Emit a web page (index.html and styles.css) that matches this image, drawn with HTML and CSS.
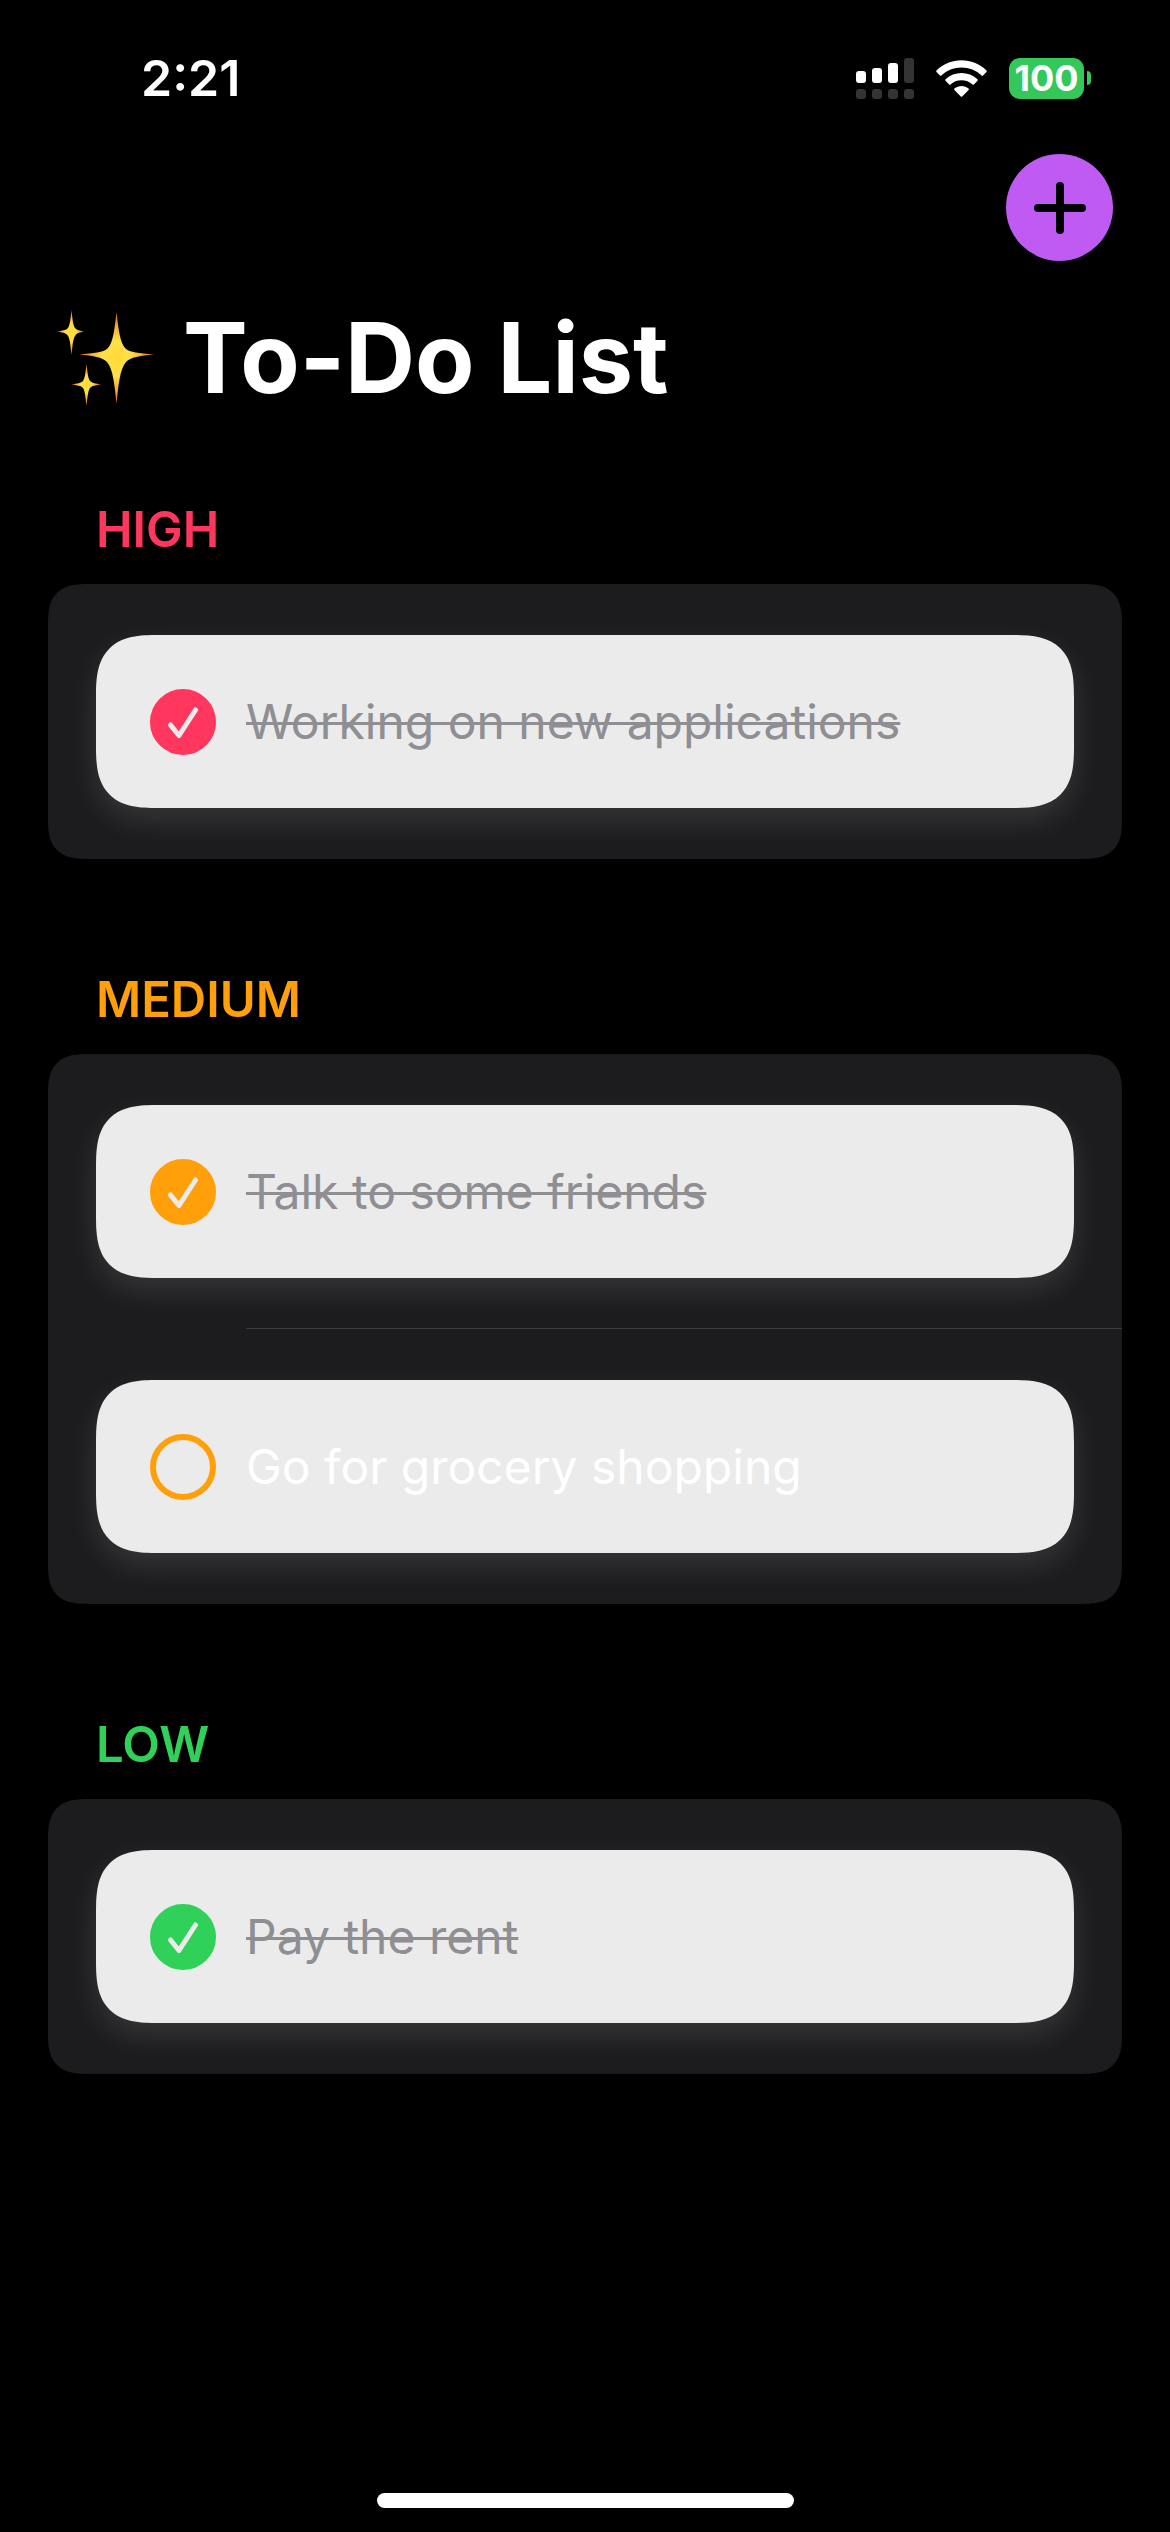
FILE: index.html
```html
<!DOCTYPE html>
<html lang="en">
<head>
  <meta charset="utf-8">
  <meta name="viewport" content="width=device-width, initial-scale=1">
  <title>To-Do List</title>
  <link rel="stylesheet" href="styles.css">
</head>
<body>
  <div class="app">
    <header class="status-bar">
      <time class="clock">2:21</time>
      <div class="indicators">
        <svg class="signal" viewBox="0 0 58 41" role="img" aria-label="Signal strength">
          <g fill="#fff">
            <rect x="0" y="13" width="10" height="12" rx="3"/>
            <rect x="16" y="10" width="10" height="15" rx="3"/>
            <rect x="32" y="5" width="10" height="20" rx="3"/>
          </g>
          <g fill="#333">
            <rect x="48" y="0" width="10" height="25" rx="3"/>
            <rect x="0" y="31" width="10" height="10" rx="3"/>
            <rect x="16" y="31" width="10" height="10" rx="3"/>
            <rect x="32" y="31" width="10" height="10" rx="3"/>
            <rect x="48" y="31" width="10" height="10" rx="3"/>
          </g>
        </svg>
        <svg class="wifi" viewBox="0 0 51 37" role="img" aria-label="Wi-Fi">
          <g fill="#fff">
            <path d="M25.500 7.600C33.200 7.600 40.300 10.500 45.600 15.500C46 15.900 46.600 15.900 47 15.500L50.500 11.900C50.900 11.500 50.900 10.900 50.500 10.500C36.500-3.100 14.500-3.100.5 10.500C.1 10.900.1 11.500.5 11.900L4 15.500C4.400 15.900 5 15.900 5.400 15.500C10.700 10.500 17.800 7.600 25.500 7.600Z"/>
            <path d="M25.500 20.200C29.700 20.200 33.600 21.700 36.500 24.400C36.900 24.800 37.500 24.800 37.900 24.400L41.500 20.800C41.900 20.400 41.900 19.700 41.500 19.300C32.500 10.900 18.500 10.900 9.500 19.300C9.100 19.700 9.100 20.400 9.500 20.800L13.100 24.400C13.500 24.800 14.100 24.800 14.500 24.400C17.400 21.700 21.300 20.200 25.500 20.200Z"/>
            <path d="M32.600 28.600C33 29 33 29.600 32.600 30L26.200 36.500C25.800 36.900 25.200 36.900 24.800 36.500L18.400 30C18 29.600 18 29 18.400 28.600C22.500 25.200 28.500 25.200 32.600 28.600Z"/>
          </g>
        </svg>
        <div class="battery">
          <span class="battery-level">100</span>
          <span class="battery-tip"></span>
        </div>
      </div>
    </header>

    <nav class="toolbar">
      <button class="add-button" type="button" aria-label="Add task">
        <svg class="plus" viewBox="0 0 52 52" aria-hidden="true">
          <path d="M26 4V48M4 26H48" stroke="#000" stroke-width="8" stroke-linecap="round"/>
        </svg>
      </button>
    </nav>

    <main>
      <h1 class="title">
        <svg class="sparkles" viewBox="0 0 98 96" aria-hidden="true">
          <defs>
            <radialGradient id="gold">
              <stop offset="0" stop-color="#ffdc35"/>
              <stop offset=".38" stop-color="#ffdf4a"/>
              <stop offset=".6" stop-color="#fdb93a"/>
              <stop offset="1" stop-color="#d9702a"/>
            </radialGradient>
          </defs>
          <g fill="url(#gold)">
            <path d="M59.500 2C61.500 20 63 32 68 38C73 43 82 43 97 44.500C82 46 74 47 69 52C63 59 61.500 74 59.500 94C57.500 74 56 59 50 52C45 47 37 46 22 44.500C37 43 46 43 51 38C56 32 57.500 20 59.500 2Z"/>
            <path d="M14.500 0C15.500 9 16 15 18 18C20 20.500 23 20.500 27 21.500C23 22.500 20 22.500 18 26C16 29 15.500 36 14.500 45C13.500 36 13 29 11 26C9 22.500 5 22.500 0 21.500C5 20.500 9 20.500 11 18C13 15 13.500 9 14.500 0Z"/>
            <path d="M29.500 54C30.500 63 31 68 33 71C35 73 38.500 73.500 44 74.500C38.500 75.500 35 75.500 33 78C31 81 30.500 87 29.500 96C28.500 87 28 81 26 78C24 75.500 20.500 75.500 14 74.500C20.500 73.500 24 73 26 71C28 68 28.500 63 29.500 54Z"/>
          </g>
        </svg>
        <span>To-Do List</span>
      </h1>

      <section class="group high">
        <h2 class="group-name">HIGH</h2>
        <ul class="list">
          <li>
            <label class="task">
              <span class="check">
                <input type="checkbox" checked>
                <svg class="tick" viewBox="0 0 66 66" aria-hidden="true"><path d="M20.500 36L29 46.500L45.500 21"/></svg>
              </span>
              <span class="task-name">Working on new applications</span>
            </label>
          </li>
        </ul>
      </section>

      <section class="group medium">
        <h2 class="group-name">MEDIUM</h2>
        <ul class="list">
          <li>
            <label class="task">
              <span class="check">
                <input type="checkbox" checked>
                <svg class="tick" viewBox="0 0 66 66" aria-hidden="true"><path d="M20.500 36L29 46.500L45.500 21"/></svg>
              </span>
              <span class="task-name">Talk to some friends</span>
            </label>
          </li>
          <li>
            <label class="task">
              <span class="check">
                <input type="checkbox">
                <svg class="tick" viewBox="0 0 66 66" aria-hidden="true"><path d="M20.500 36L29 46.500L45.500 21"/></svg>
              </span>
              <span class="task-name">Go for grocery shopping</span>
            </label>
          </li>
        </ul>
      </section>

      <section class="group low">
        <h2 class="group-name">LOW</h2>
        <ul class="list">
          <li>
            <label class="task">
              <span class="check">
                <input type="checkbox" checked>
                <svg class="tick" viewBox="0 0 66 66" aria-hidden="true"><path d="M20.500 36L29 46.500L45.500 21"/></svg>
              </span>
              <span class="task-name">Pay the rent</span>
            </label>
          </li>
        </ul>
      </section>
    </main>

    <div class="home-indicator"></div>
  </div>
</body>
</html>
```

FILE: styles.css
```css
* {
  box-sizing: border-box;
}

body {
  margin: 0;
  background: #000;
  color: #fff;
  font-family: Inter, "Liberation Sans", sans-serif;
}

.app {
  display: flex;
  flex-direction: column;
  min-height: 100vh;
  padding: 48px 48px 24px;
}

/* Status bar */
.status-bar {
  display: flex;
  align-items: center;
  justify-content: space-between;
  height: 60px;
  padding: 0 31px 0 93px;
}

.clock {
  font-size: 50px;
  font-weight: 600;
  line-height: 60px;
}

.indicators {
  display: flex;
  align-items: center;
  gap: 22px;
}

.signal {
  width: 58px;
  height: 41px;
}

.wifi {
  width: 51px;
  height: 37px;
}

.battery {
  display: flex;
  align-items: center;
  gap: 3px;
}

.battery-level {
  width: 75px;
  border-radius: 11px;
  background: #34c759;
  font-size: 36px;
  font-weight: 700;
  line-height: 41px;
  text-align: center;
}

.battery-tip {
  width: 4px;
  height: 14px;
  border-radius: 0 4px 4px 0;
  background: #34c759;
}

/* Toolbar */
.toolbar {
  display: flex;
  justify-content: flex-end;
  padding: 46px 9px 0;
}

.add-button {
  display: grid;
  place-items: center;
  width: 107px;
  height: 107px;
  padding: 0;
  border: 0;
  border-radius: 50%;
  background: #bf5af2;
}

.plus {
  width: 52px;
  height: 52px;
}

.title {
  display: flex;
  align-items: center;
  gap: 28px;
  margin: 37px 0 82px;
  padding-left: 9px;
  font-size: 97px;
  font-weight: 700;
  line-height: 120px;
}

.sparkles {
  width: 98px;
  height: 96px;
}

/* Task groups */
.group + .group {
  margin-top: 111px;
}

.high {
  --accent: #ff375f;
}

.medium {
  --accent: #ff9f0a;
}

.low {
  --accent: #30d158;
}

.group-name {
  margin: 0 0 24px;
  padding-left: 48px;
  color: var(--accent);
  font-size: 49px;
  font-weight: 600;
  line-height: 60px;
}

.list {
  margin: 0;
  padding: 0;
  overflow: hidden;
  border-radius: 30px;
  background: #1c1c1e;
  list-style: none;
}

.list li {
  display: flow-root;
}

.list li + li::before {
  content: "";
  display: block;
  height: 1px;
  margin: -1px 0 0 198px;
  background: #3d3d40;
}

.task {
  display: flex;
  align-items: center;
  gap: 30px;
  margin: 51px 48px;
  padding: 53px 54px;
  border-radius: 46px;
  background: #ebebeb;
  box-shadow: 0 12px 30px rgba(255, 255, 255, 0.12);
}

.check {
  display: grid;
  flex: none;
}

.check input {
  grid-area: 1 / 1;
  appearance: none;
  width: 66px;
  height: 66px;
  margin: 0;
  border: 6px solid var(--accent);
  border-radius: 50%;
}

.check input:checked {
  background: var(--accent);
}

.tick {
  grid-area: 1 / 1;
  width: 66px;
  height: 66px;
  fill: none;
  stroke: #ebebeb;
  stroke-width: 5;
  stroke-linecap: round;
  stroke-linejoin: round;
  pointer-events: none;
}

.check input:not(:checked) + .tick {
  visibility: hidden;
}

.task-name {
  font-size: 48px;
  line-height: 67px;
}

.check:has(:checked) + .task-name {
  color: #8e8e93;
  text-decoration: line-through;
  text-decoration-thickness: 3px;
}

.home-indicator {
  align-self: center;
  width: 417px;
  height: 15px;
  margin-top: auto;
  border-radius: 8px;
  background: #fff;
}

/* Continuous-curvature corners where the browser can draw them */
@supports (corner-shape: superellipse(1.5)) {
  .list {
    border-radius: 41px;
    corner-shape: superellipse(1.5);
  }

  .task {
    border-radius: 62px;
    corner-shape: superellipse(1.5);
  }
}
```
